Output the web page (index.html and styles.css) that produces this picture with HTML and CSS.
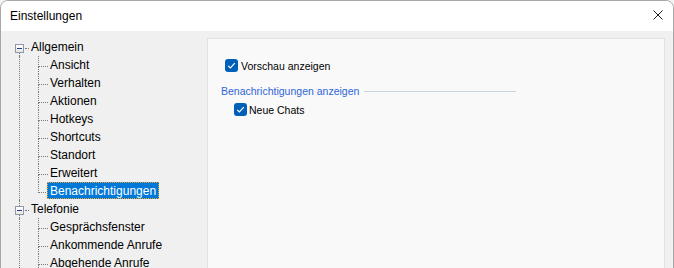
FILE: index.html
```html
<!DOCTYPE html>
<html lang="de">
<head>
  <meta charset="UTF-8">
  <meta name="viewport" content="width=device-width, initial-scale=1.0">
  <title>Einstellungen</title>
  <link rel="stylesheet" href="styles.css">
</head>
<body>
  <div class="window">
    <!-- Title bar -->
    <div class="titlebar">
      <span class="title">Einstellungen</span>
      <svg class="close" width="10" height="10" viewBox="0 0 10 10">
        <path d="M0.5 0.5 L9.5 9.5 M9.5 0.5 L0.5 9.5" stroke="#1a1a1a" stroke-width="1" fill="none"/>
      </svg>
    </div>

    <div class="body">
      <!-- Tree -->
      <div class="tree">
        <div class="node first">
          <div class="row">
            <span class="exp"><span class="seg top"></span><span class="box"><span class="minus"></span></span><span class="seg bottom"></span></span>
            <span class="hl"></span>
            <span class="label">Allgemein</span>
          </div>
          <div class="kids">
            <ul>
              <li><span class="conn"><span class="up"></span><span class="down"></span></span><span class="label">Ansicht</span></li>
              <li><span class="conn"><span class="up"></span><span class="down"></span></span><span class="label">Verhalten</span></li>
              <li><span class="conn"><span class="up"></span><span class="down"></span></span><span class="label">Aktionen</span></li>
              <li><span class="conn"><span class="up"></span><span class="down"></span></span><span class="label">Hotkeys</span></li>
              <li><span class="conn"><span class="up"></span><span class="down"></span></span><span class="label">Shortcuts</span></li>
              <li><span class="conn"><span class="up"></span><span class="down"></span></span><span class="label">Standort</span></li>
              <li><span class="conn"><span class="up"></span><span class="down"></span></span><span class="label">Erweitert</span></li>
              <li class="last"><span class="conn"><span class="up"></span><span class="down"></span></span><span class="label selected">Benachrichtigungen</span></li>
            </ul>
          </div>
        </div>
        <div class="node">
          <div class="row">
            <span class="exp"><span class="seg top"></span><span class="box"><span class="minus"></span></span><span class="seg bottom"></span></span>
            <span class="hl"></span>
            <span class="label">Telefonie</span>
          </div>
          <div class="kids">
            <ul>
              <li><span class="conn"><span class="up"></span><span class="down"></span></span><span class="label">Gesprächsfenster</span></li>
              <li><span class="conn"><span class="up"></span><span class="down"></span></span><span class="label">Ankommende Anrufe</span></li>
              <li><span class="conn"><span class="up"></span><span class="down"></span></span><span class="label">Abgehende Anrufe</span></li>
              <li class="last"><span class="conn"><span class="up"></span><span class="down"></span></span><span class="label">Weiterleitung</span></li>
            </ul>
          </div>
        </div>
      </div>

      <!-- Settings panel -->
      <div class="panel">
        <label class="check">
          <span class="box-check"><svg width="13" height="13" viewBox="0 0 13 13"><path d="M3.2 6.8 L5.4 9 L9.8 4.2" stroke="#fff" stroke-width="1.2" fill="none"/></svg></span>
          <span class="check-text">Vorschau anzeigen</span>
        </label>

        <div class="group">
          <span class="group-title">Benachrichtigungen anzeigen</span>
          <span class="group-line"></span>
        </div>

        <label class="check sub">
          <span class="box-check"><svg width="13" height="13" viewBox="0 0 13 13"><path d="M3.2 6.8 L5.4 9 L9.8 4.2" stroke="#fff" stroke-width="1.2" fill="none"/></svg></span>
          <span class="check-text">Neue Chats</span>
        </label>
      </div>
    </div>
  </div>
</body>
</html>
```

FILE: styles.css
```css
html, body {
  margin: 0;
  padding: 0;
  background: #f3f3f3;
  overflow: hidden;
}
body {
  font-family: "Liberation Sans", Arial, sans-serif;
  color: #000;
}
.window {
  width: 674px;
  height: 320px;
  box-sizing: border-box;
  border: 1px solid #a8a8a8;
  border-radius: 8px 8px 0 0;
  background: #f0f0f0;
  overflow: hidden;
  display: flex;
  flex-direction: column;
}
.titlebar {
  height: 30px;
  background: #fff;
  display: flex;
  align-items: flex-start;
  justify-content: space-between;
}
.title {
  font-size: 12px;
  line-height: 30px;
  padding-left: 9px;
}
.close {
  margin: 9px 10px 0 0;
}
.body {
  flex: 1;
  display: flex;
}

/* Tree */
.tree {
  width: 206px;
  padding: 7px 0 0 14px;
  box-sizing: border-box;
  font-size: 12px;
}
.row {
  display: flex;
  height: 18px;
}
.exp {
  width: 9px;
  display: flex;
  flex-direction: column;
}
.seg {
  margin-left: 4px;
  border-left: 1px dotted #7a7a7a;
}
.seg.top {
  height: 6px;
}
.first .seg.top {
  border-left-color: transparent;
}
.seg.bottom {
  flex: 1;
}
.box {
  width: 9px;
  height: 9px;
  box-sizing: border-box;
  border: 1px solid #8f98a8;
  background: linear-gradient(#ffffff, #e6e6e6);
  display: flex;
  align-items: center;
  justify-content: center;
}
.minus {
  width: 5px;
  height: 1px;
  background: #23408e;
}
.hl {
  width: 4px;
  margin: 10px 0 0 1px;
  height: 0;
  border-top: 1px dotted #7a7a7a;
}
.label {
  height: 17px;
  box-sizing: border-box;
  line-height: 16px;
  padding: 1px 2px 0;
  white-space: nowrap;
}
.label.selected {
  background: #0078d7;
  color: #fff;
  padding: 1px 3px 0;
  margin-left: -1px;
  outline: 1px dotted #f0a030;
  outline-offset: -1px;
}
.kids {
  margin-left: 4px;
  border-left: 1px dotted #7a7a7a;
}
.kids ul {
  list-style: none;
  margin: 0;
  padding: 0 0 0 18px;
}
.kids li {
  display: flex;
  height: 18px;
}
.conn {
  width: 10px;
  display: flex;
  flex-direction: column;
}
.conn .up {
  height: 11px;
  box-sizing: border-box;
  border-left: 1px dotted #7a7a7a;
  border-bottom: 1px dotted #7a7a7a;
}
.conn .down {
  flex: 1;
  border-left: 1px dotted #7a7a7a;
}
.kids li.last .down {
  border-left-color: transparent;
}

/* Panel */
.panel {
  flex: 1;
  margin: 7px 8px 0 0;
  background: #f9f9f9;
  border: 1px solid #e1e1e1;
  padding: 20px 0 0 17px;
  font-size: 10.5px;
}
.check {
  display: flex;
  align-items: flex-start;
  gap: 3px;
}
.check.sub {
  margin: 5px 0 0 9px;
  gap: 2px;
}
.box-check {
  width: 13px;
  height: 13px;
  border-radius: 3px;
  background: #005fb8;
  display: flex;
}
.check-text {
  line-height: 13px;
  margin-top: 1px;
}
.group {
  width: 295px;
  margin: 11px 0 0 -4px;
  height: 14px;
  display: flex;
  align-items: center;
  gap: 5px;
}
.group-title {
  color: #2f66d8;
  line-height: 14px;
  white-space: nowrap;
}
.group-line {
  flex: 1;
  height: 1px;
  background: #c8d3e3;
}
```
